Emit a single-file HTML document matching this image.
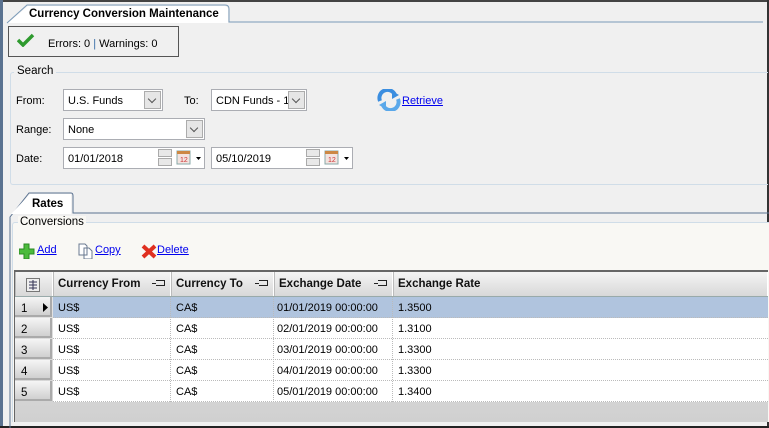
<!DOCTYPE html>
<html><head><style>
*{box-sizing:border-box}
body{margin:0;width:769px;height:428px;overflow:hidden;background:#f0f0f0;font-family:"Liberation Sans",sans-serif;font-size:11px;color:#000;position:relative}
.a{position:absolute}
.combo{position:absolute;background:#fff;border:1px solid #abadb3;height:22px;padding:5px 4px 0;white-space:nowrap;overflow:hidden}
.dd{position:absolute;right:1px;top:1px;width:17px;height:18px;background:#e6e6e6;border:1px solid #acacac}
.dd:after{content:"";position:absolute;left:4px;top:4px;width:5px;height:5px;border-right:1px solid #555;border-bottom:1px solid #555;transform:rotate(45deg)}
.spin{position:absolute;width:14px;height:18px;top:1px}
.spin div{height:8px;margin-bottom:1px;background:#e8e8e8;border:1px solid #aaa;position:relative}
a{color:#0000ee;text-decoration:underline}
.hdr{position:absolute;top:272px;height:24px;background:linear-gradient(#f4f4f4,#d8d8d8);border-right:1px solid #fff;border-left:1px solid #bbb;font-weight:bold;font-size:11.5px;padding:6px 4px;color:#111}
.pin{position:absolute;right:5px;top:8px;width:9px;height:6px;border:1px solid #222;border-left:none}
.pin:before{content:"";position:absolute;left:-4px;top:2px;width:4px;height:1px;background:#222}
.row{position:absolute;left:53px;width:715px;height:21px;border-bottom:1px dotted #bbb}
.row span{position:absolute;top:5px}
.rh{position:absolute;left:15px;width:37px;height:20px;background:linear-gradient(#f5f5f5,#d0d0d0);border-right:2px solid #aaa;border-bottom:2px solid #aaa;padding:6px 6px;font-size:11.5px}
</style></head><body>
<div class="a" style="left:0;top:0;width:769px;height:2px;background:#444"></div>
<div class="a" style="left:0;top:0;width:3px;height:428px;background:#5a7290"></div>
<div class="a" style="left:767px;top:0;width:2px;height:428px;background:#333"></div>
<div class="a" style="left:0;top:426px;width:769px;height:2px;background:#222"></div>
<svg class="a" style="left:3px;top:3px" width="760" height="22"><path d="M4 20 L24 2 H222 Q226 2 226 6 V19 H760" fill="none" stroke="#7a9ab8"/><path d="M5 20 L25 3 H221 Q225 3 225 7 V20 Z" fill="#fff"/></svg>
<div class="a" style="left:29px;top:8px;font-weight:bold;font-size:11.5px">Currency Conversion Maintenance</div>
<div class="a" style="left:8px;top:26px;width:171px;height:31px;border:1px solid #555"></div>
<svg class="a" style="left:17px;top:33px" width="18" height="14"><path d="M1 7 L6 12 L16 2" fill="none" stroke="#2e9a2e" stroke-width="3.5"/></svg>
<div class="a" style="left:48px;top:38px">Errors: 0 <span style="color:#3a6ea8">|</span> Warnings: 0</div>
<div class="a" style="left:10px;top:72px;width:758px;height:113px;border:1px solid #d0dde8;border-right:none;border-radius:3px 0 0 3px"></div>
<div class="a" style="left:14px;top:65px;background:#f0f0f0;padding:0 3px;font-size:11.5px">Search</div>
<div class="a" style="left:16px;top:95px">From:</div>
<div class="combo" style="left:63px;top:89px;width:100px">U.S. Funds<div class="dd"></div></div>
<div class="a" style="left:184px;top:95px">To:</div>
<div class="combo" style="left:211px;top:89px;width:96px">CDN Funds - 1<div class="dd"></div></div>
<svg class="a" style="left:377px;top:89px" width="24" height="22"><path d="M3 12 A8 8 0 0 1 18 6" fill="none" stroke="#3b8ee0" stroke-width="4"/><path d="M15 2 L22 6 L15 10Z" fill="#3b8ee0"/><path d="M21 10 A8 8 0 0 1 6 16" fill="none" stroke="#5aa8ea" stroke-width="4"/><path d="M9 20 L2 16 L9 12Z" fill="#5aa8ea"/></svg>
<div class="a" style="left:402px;top:95px"><a>Retrieve</a></div>
<div class="a" style="left:16px;top:124px">Range:</div>
<div class="combo" style="left:63px;top:118px;width:142px">None<div class="dd"></div></div>
<div class="a" style="left:16px;top:153px">Date:</div>
<div class="combo" style="left:63px;top:147px;width:142px">01/01/2018
<div class="spin" style="left:94px"><div></div><div></div></div>
<svg class="a" style="left:112px;top:2px" width="28" height="16"><rect x="1" y="1" width="13" height="13" fill="#f3e4e0" stroke="#8aa"/><rect x="1" y="1" width="13" height="3" fill="#c84"/><text x="4" y="12" font-size="7" fill="#c33" font-family="Liberation Sans">12</text><path d="M20 7 h5 l-2.5 3z" fill="#000"/></svg></div>
<div class="combo" style="left:211px;top:147px;width:142px">05/10/2019
<div class="spin" style="left:94px"><div></div><div></div></div>
<svg class="a" style="left:112px;top:2px" width="28" height="16"><rect x="1" y="1" width="13" height="13" fill="#f3e4e0" stroke="#8aa"/><rect x="1" y="1" width="13" height="3" fill="#c84"/><text x="4" y="12" font-size="7" fill="#c33" font-family="Liberation Sans">12</text><path d="M20 7 h5 l-2.5 3z" fill="#000"/></svg></div>
<svg class="a" style="left:3px;top:192px" width="766" height="236"><path d="M7 236 V25 L26 1 H68 Q70 1 70 4 V21 H766" fill="none" stroke="#5a7290"/><path d="M8 22 L27 2 H68 V22Z" fill="#fff"/></svg>
<div class="a" style="left:32px;top:198px;font-weight:bold;font-size:11.5px">Rates</div>
<div class="a" style="left:12px;top:222px;width:757px;height:200px;border-top:1px solid #d0dde8;border-left:1px solid #d0dde8;border-radius:3px 0 0 0;background:#f9f8f4"></div>
<div class="a" style="left:18px;top:216px;background:#f9f8f4;padding:0 2px;font-size:11.5px">Conversions</div>
<svg class="a" style="left:19px;top:243px" width="16" height="16"><path d="M5 1h5v5h5v5h-5v5h-5v-5h-5v-5h5z" fill="#4cbb3c" stroke="#2a8a22"/></svg>
<div class="a" style="left:37px;top:244px"><a>Add</a></div>
<svg class="a" style="left:78px;top:243px" width="16" height="16"><path d="M1 1h6l2 2v9h-8z M6 5h5l3 3v8h-8z" fill="#fff" stroke="#6a7a90"/></svg>
<div class="a" style="left:95px;top:244px"><a>Copy</a></div>
<svg class="a" style="left:141px;top:243px" width="16" height="16"><path d="M2 3 L14 14 M14 3 L2 14" stroke="#e03020" stroke-width="4"/></svg>
<div class="a" style="left:157px;top:244px"><a>Delete</a></div>
<div class="a" style="left:14px;top:270px;width:754px;height:152px;border-top:2px solid #666;border-left:1px solid #666;background:linear-gradient(#e8e8e8,#d0d0d0)"></div>
<div class="hdr" style="left:15px;width:38px"><svg width="14" height="14" style="margin-left:6px"><rect x=".5" y=".5" width="13" height="13" fill="#eee" stroke="#777"/><path d="M3 4h8M3 7h8M3 10h8M7 2v10" stroke="#335"/></svg></div>
<div class="hdr" style="left:53px;width:118px">Currency From<div class="pin"></div></div>
<div class="hdr" style="left:171px;width:103px">Currency To<div class="pin"></div></div>
<div class="hdr" style="left:274px;width:119px">Exchange Date<div class="pin"></div></div>
<div class="hdr" style="left:393px;width:375px">Exchange Rate</div>
<div class="a" style="left:15px;top:296px;width:753px;height:1px;background:#9aa"></div>
<div class="row" style="top:297px;background:#b0c4de"><span style="left:5px">US$</span><span style="left:123px">CA$</span><span style="left:224px">01/01/2019 00:00:00</span><span style="left:345px">1.3500</span></div>
<div class="row" style="top:318px;background:#fff"><span style="left:5px">US$</span><span style="left:123px">CA$</span><span style="left:224px">02/01/2019 00:00:00</span><span style="left:345px">1.3100</span></div>
<div class="row" style="top:339px;background:#fff"><span style="left:5px">US$</span><span style="left:123px">CA$</span><span style="left:224px">03/01/2019 00:00:00</span><span style="left:345px">1.3300</span></div>
<div class="row" style="top:360px;background:#fff"><span style="left:5px">US$</span><span style="left:123px">CA$</span><span style="left:224px">04/01/2019 00:00:00</span><span style="left:345px">1.3300</span></div>
<div class="row" style="top:381px;background:#fff"><span style="left:5px">US$</span><span style="left:123px">CA$</span><span style="left:224px">05/01/2019 00:00:00</span><span style="left:345px">1.3400</span></div>
<div class="a" style="left:170px;top:297px;height:105px;border-left:1px dotted #bbb"></div>
<div class="a" style="left:273px;top:297px;height:105px;border-left:1px dotted #bbb"></div>
<div class="a" style="left:392px;top:297px;height:105px;border-left:1px dotted #bbb"></div>
<div class="rh" style="top:297px">1<svg style="position:absolute;left:28px;top:6px" width="6" height="9"><path d="M0 0L5 4.5L0 9z"/></svg></div>
<div class="rh" style="top:318px">2</div>
<div class="rh" style="top:339px">3</div>
<div class="rh" style="top:360px">4</div>
<div class="rh" style="top:381px">5</div>
</body></html>
